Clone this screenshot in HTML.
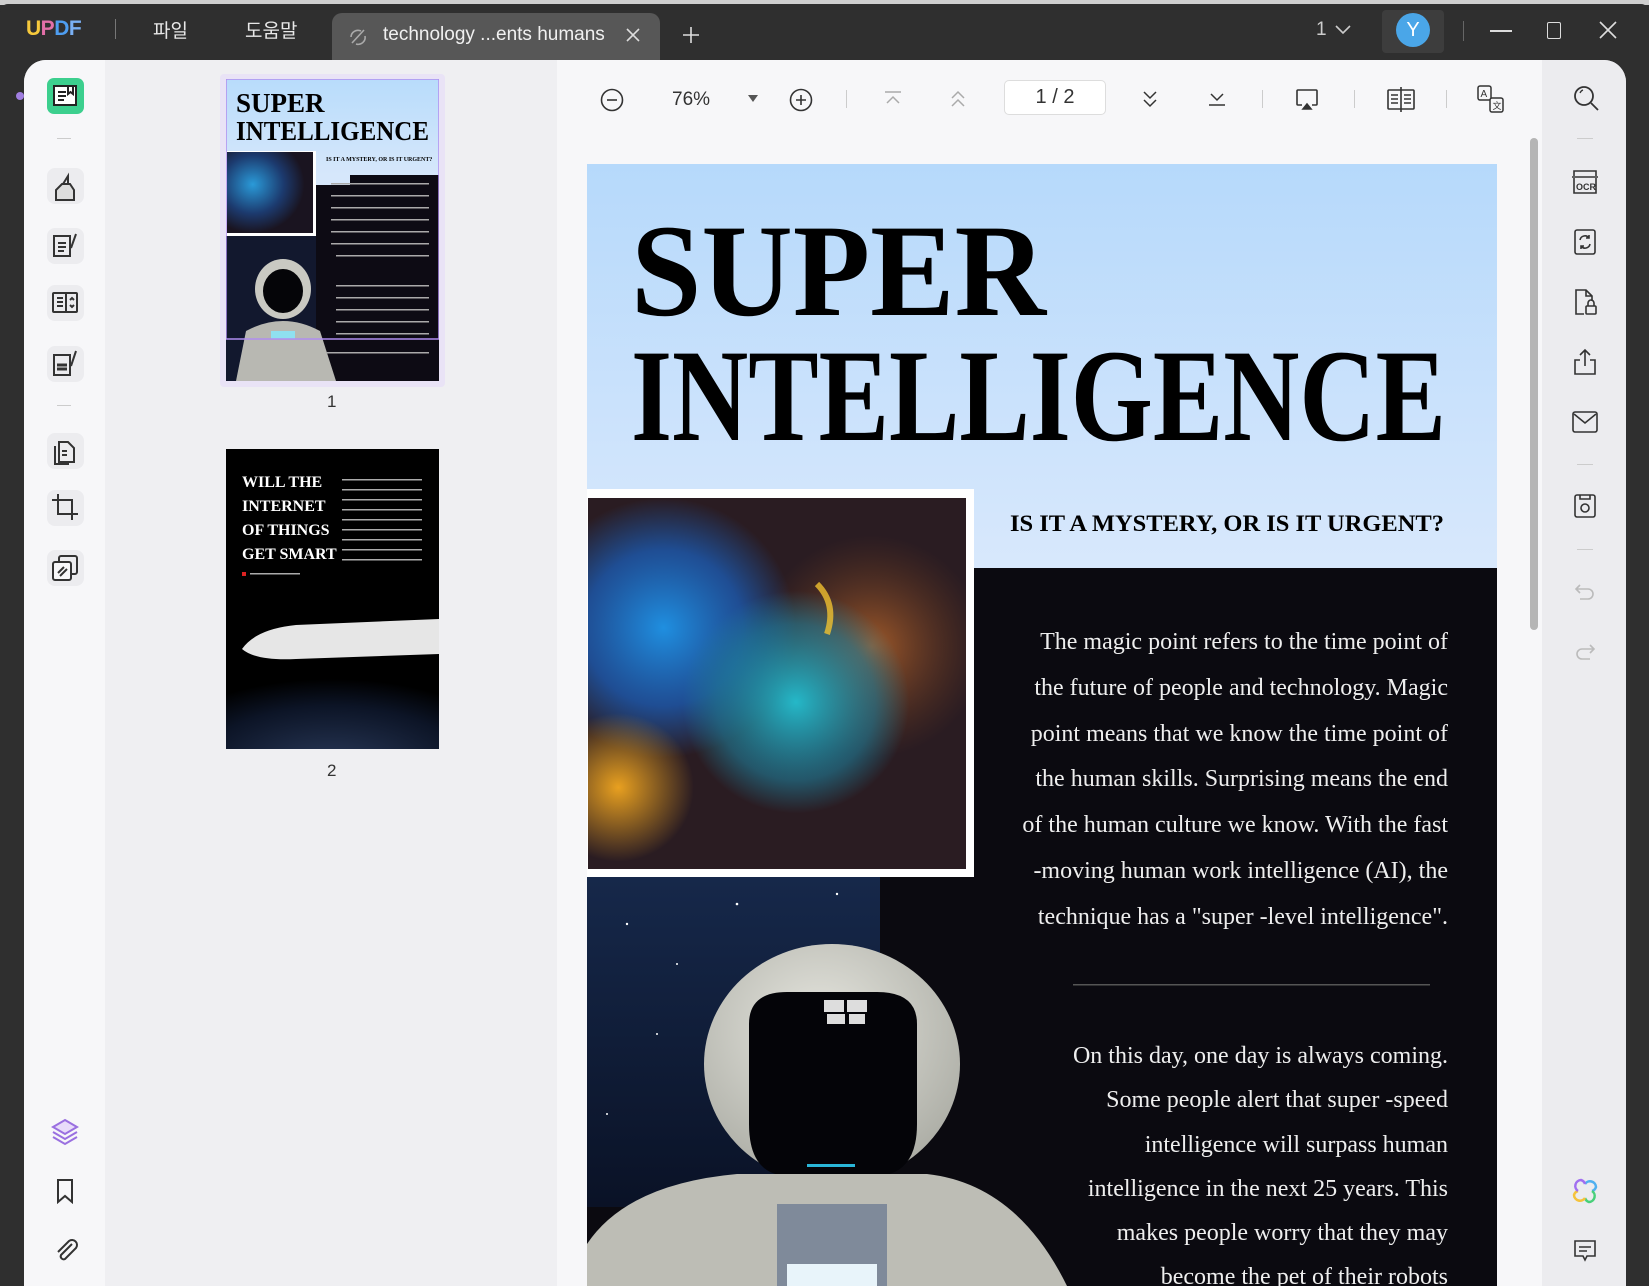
<!DOCTYPE html>
<html><head><meta charset="utf-8"><style>
*{margin:0;padding:0;box-sizing:border-box}
body{width:1649px;height:1286px;overflow:hidden;background:#2f2f2f;font-family:"Liberation Sans","Noto Sans CJK KR",sans-serif;position:relative}
.abs{position:absolute}
.tb{color:#e8e8e8;font-size:19px}
svg{display:block}
.ib{position:absolute;left:47px;width:37px;height:36px;border-radius:8px;background:#ececef}
</style></head><body>
<div class="abs" style="left:0;top:0;width:1649px;height:5px;background:#cfcfcf"></div>
<div class="abs" style="left:0;top:4px;width:1649px;height:1282px;background:#2f2f2f;border-radius:8px 8px 0 0"></div>
<div class="abs" style="left:26px;top:17px;font-size:21px;font-weight:bold;letter-spacing:-0.5px"><span style="color:#f6c93c">U</span><span style="color:#e26fa8">P</span><span style="color:#4e9df0">D</span><span style="color:#7ab0f4">F</span></div>
<div class="abs" style="left:115px;top:19px;width:1px;height:20px;background:#777"></div>
<div class="abs tb" style="left:153px;top:16px">파일</div>
<div class="abs tb" style="left:245px;top:16px">도움말</div>
<div class="abs" style="left:332px;top:13px;width:328px;height:47px;background:#575757;border-radius:10px 10px 0 0"></div>
<svg class="abs" style="left:346px;top:25px" width="24" height="24" viewBox="0 0 24 24" fill="none" stroke="#aaa" stroke-width="1.6"><path d="M6 18 L18 5 M5 12a7 7 0 0 1 10-6 M19 11a7 7 0 0 1-9 8"/></svg>
<div class="abs tb" style="left:383px;top:24px;font-size:19px;color:#f0f0f0">technology ...ents humans</div>
<svg class="abs" style="left:625px;top:27px" width="16" height="16" viewBox="0 0 16 16" stroke="#ddd" stroke-width="1.6"><path d="M2 2L14 14M14 2L2 14"/></svg>
<svg class="abs" style="left:682px;top:26px" width="18" height="18" viewBox="0 0 18 18" stroke="#ddd" stroke-width="1.6"><path d="M9 1V17M1 9H17"/></svg>
<div class="abs tb" style="left:1316px;top:19px;color:#ccc">1</div>
<svg class="abs" style="left:1335px;top:24px" width="16" height="12" viewBox="0 0 16 12" fill="none" stroke="#ccc" stroke-width="1.6"><path d="M1 2L8 9L15 2"/></svg>
<div class="abs" style="left:1382px;top:10px;width:62px;height:43px;background:#3d3d3d;border-radius:4px"></div>
<div class="abs" style="left:1396px;top:13px;width:34px;height:34px;border-radius:50%;background:#4aa6e8;color:#fff;font-size:20px;text-align:center;line-height:34px">Y</div>
<div class="abs" style="left:1463px;top:21px;width:1px;height:20px;background:#666"></div>
<div class="abs" style="left:1490px;top:30px;width:22px;height:1.5px;background:#ddd"></div>
<div class="abs" style="left:1547px;top:22px;width:14px;height:17px;border:1.6px solid #ddd;border-radius:2px"></div>
<svg class="abs" style="left:1599px;top:21px" width="18" height="18" viewBox="0 0 18 18" stroke="#ddd" stroke-width="1.6"><path d="M1 1L17 17M17 1L1 17"/></svg>

<div class="abs" style="left:24px;top:60px;width:1602px;height:1226px;background:#f7f7f9;border-radius:22px 22px 0 0;overflow:hidden">
  <div class="abs" style="left:0;top:0;width:81px;height:1226px;background:#f7f7f9"></div>
  <div class="abs" style="left:81px;top:0;width:452px;height:1226px;background:#efeff2"></div>
  <div class="abs" style="left:1518px;top:0;width:84px;height:1226px;background:#ececef"></div>
</div>
<div class="abs" style="left:16px;top:92px;width:8px;height:8px;border-radius:50%;background:#a07ee0"></div>

<div class="ib" style="top:168px"></div><div class="ib" style="top:228px"></div><div class="ib" style="top:285px"></div><div class="ib" style="top:346px"></div><div class="ib" style="top:433px"></div><div class="ib" style="top:490px"></div><div class="ib" style="top:550px"></div>
<div class="abs" style="left:47px;top:78px;width:37px;height:36px;border-radius:7px;background:#3ccf8e"></div>
<svg class="abs" style="left:51px;top:82px" width="28" height="28" viewBox="0 0 28 28" fill="none" stroke="#222" stroke-width="2"><rect x="3" y="4" width="22" height="19" fill="#fff"/><path d="M7 10h8M7 14h8M7 18h6M17 4v8l2.5-2 2.5 2V4"/></svg>
<div class="abs" style="left:57px;top:138px;width:14px;height:1px;background:#ccc"></div>
<svg class="abs" style="left:50px;top:170px" width="30" height="32" viewBox="0 0 30 32" fill="none" stroke="#333" stroke-width="2"><path d="M6 30V20l6-6 8 0 4 6v10z" fill="#ddd"/><path d="M13 14l5-8v8"/></svg>
<svg class="abs" style="left:50px;top:230px" width="30" height="30" viewBox="0 0 30 30" fill="none" stroke="#333" stroke-width="2"><path d="M4 6h16v20H4zM8 13h8M8 17h8M8 21h6M21 18l5-14"/></svg>
<svg class="abs" style="left:50px;top:288px" width="30" height="30" viewBox="0 0 30 30" fill="none" stroke="#333" stroke-width="2"><rect x="3" y="5" width="24" height="19" rx="1"/><path d="M16 5v19M7 10h6M7 14h6M7 18h6M20 12l2-2 2 2M20 17l2 2 2-2"/></svg>
<svg class="abs" style="left:50px;top:348px" width="30" height="30" viewBox="0 0 30 30" fill="none" stroke="#333" stroke-width="2"><path d="M4 7h16v20H4z"/><path d="M7 17h10M7 21h10" stroke-width="3"/><path d="M21 18l5-15"/></svg>
<div class="abs" style="left:57px;top:405px;width:14px;height:1px;background:#ccc"></div>
<svg class="abs" style="left:50px;top:436px" width="30" height="30" viewBox="0 0 30 30" fill="none" stroke="#333" stroke-width="2"><path d="M9 6h9l6 6v14H9zM5 10v18h14M12 15h5M12 19h5"/></svg>
<svg class="abs" style="left:50px;top:492px" width="30" height="30" viewBox="0 0 30 30" fill="none" stroke="#333" stroke-width="2"><path d="M8 2v20h20M2 8h20v20"/></svg>
<svg class="abs" style="left:50px;top:553px" width="30" height="30" viewBox="0 0 30 30" fill="none" stroke="#333" stroke-width="2"><rect x="9" y="3" width="18" height="18" rx="2"/><rect x="3" y="9" width="18" height="18" rx="2" fill="#f7f7f9"/><path d="M8 20l6-6M10 23l7-7"/></svg>
<svg class="abs" style="left:50px;top:1116px" width="30" height="30" viewBox="0 0 30 30" fill="none" stroke="#9a70e0" stroke-width="2"><path d="M15 4L27 11 15 18 3 11z" fill="#e8dcfa"/><path d="M3 16l12 7 12-7M3 21l12 7 12-7"/></svg>
<svg class="abs" style="left:54px;top:1178px" width="22" height="26" viewBox="0 0 22 26" fill="none" stroke="#333" stroke-width="2"><path d="M4 2h14v22l-7-6-7 6z"/></svg>
<svg class="abs" style="left:52px;top:1236px" width="28" height="28" viewBox="0 0 28 28" fill="none" stroke="#333" stroke-width="2"><path d="M20 8L9 19a3 3 0 0 0 4 4L24 12a5 5 0 0 0-7-7L6 16"/></svg>

<div class="abs" style="left:220px;top:74px;width:225px;height:313px;background:#e9e3f6;border-radius:4px"></div>
<svg class="abs" style="left:226px;top:79px" width="213" height="302" viewBox="0 0 213 302">
<defs><linearGradient id="tg" x1="0" y1="0" x2="0" y2="1"><stop offset="0" stop-color="#b8dcfb"/><stop offset="1" stop-color="#d6e7fb"/></linearGradient>
<radialGradient id="nb2" cx="0.3" cy="0.4" r="0.6"><stop offset="0" stop-color="#2a9ad8"/><stop offset="0.6" stop-color="#1c3a6e"/><stop offset="1" stop-color="#1a1420"/></radialGradient></defs>
<rect width="213" height="302" fill="#0d0b14"/><rect width="213" height="96" fill="url(#tg)"/>
<rect x="0" y="96" width="124" height="10" fill="#d6e7fb"/>
<text x="10" y="33" font-family="Liberation Serif" font-weight="bold" font-size="27">SUPER</text>
<text x="10" y="61" font-family="Liberation Serif" font-weight="bold" font-size="27" textLength="193" lengthAdjust="spacingAndGlyphs">INTELLIGENCE</text>
<text x="100" y="82" font-family="Liberation Serif" font-size="6" font-weight="bold">IS IT A MYSTERY, OR IS IT URGENT?</text>
<rect x="0" y="72" width="90" height="85" fill="#fff"/><rect x="1" y="73" width="86" height="81" fill="url(#nb2)"/>
<rect x="0" y="157" width="90" height="145" fill="#12182e"/>
<ellipse cx="57" cy="210" rx="28" ry="30" fill="#c9c9c2"/><ellipse cx="57" cy="212" rx="20" ry="22" fill="#050508"/>
<path d="M10 302 L20 252 Q57 232 94 252 L110 302z" fill="#b8b8b2"/>
<rect x="45" y="252" width="24" height="8" fill="#8fe0f0"/>
<g fill="#aaa"><rect x="105" y="104" width="98" height="1.5"/><rect x="105" y="116" width="98" height="1.5"/><rect x="105" y="128" width="98" height="1.5"/><rect x="105" y="140" width="98" height="1.5"/><rect x="105" y="152" width="98" height="1.5"/><rect x="105" y="164" width="98" height="1.5"/><rect x="110" y="176" width="93" height="1.5"/><rect x="110" y="206" width="93" height="1.5"/><rect x="110" y="218" width="93" height="1.5"/><rect x="110" y="230" width="93" height="1.5"/><rect x="110" y="242" width="93" height="1.5"/><rect x="110" y="254" width="93" height="1.5"/><rect x="100" y="273" width="103" height="1.5"/></g>
<rect x="0" y="0" width="213" height="260" fill="none" stroke="#b08ef0" stroke-width="1.5"/>
</svg>
<div class="abs" style="left:327px;top:392px;font-size:17px;color:#333">1</div>
<svg class="abs" style="left:226px;top:449px" width="213" height="300" viewBox="0 0 213 300">
<defs><radialGradient id="earth" cx="0.5" cy="1.2" r="0.9"><stop offset="0" stop-color="#2a3a5a"/><stop offset="0.7" stop-color="#0c1426"/><stop offset="1" stop-color="#000"/></radialGradient></defs>
<rect width="213" height="300" fill="#000"/><rect y="200" width="213" height="100" fill="url(#earth)"/>
<g font-family="Liberation Serif" font-weight="bold" font-size="16" fill="#fff"><text x="16" y="38">WILL THE</text><text x="16" y="62">INTERNET</text><text x="16" y="86">OF THINGS</text><text x="16" y="110">GET SMART</text></g>
<g fill="#aaa"><rect x="116" y="30" width="80" height="1.5"/><rect x="116" y="40" width="80" height="1.5"/><rect x="116" y="50" width="80" height="1.5"/><rect x="116" y="60" width="80" height="1.5"/><rect x="116" y="70" width="80" height="1.5"/><rect x="116" y="80" width="80" height="1.5"/><rect x="116" y="90" width="80" height="1.5"/><rect x="116" y="100" width="80" height="1.5"/><rect x="116" y="110" width="80" height="1.5"/><rect x="24" y="124" width="50" height="1.5"/></g>
<rect x="16" y="123" width="4" height="4" fill="#d22"/>
<path d="M16 200 Q30 180 70 176 L213 170 L213 205 L70 210 Q30 212 16 200z" fill="#e6e6e6"/>
</svg>
<div class="abs" style="left:327px;top:761px;font-size:17px;color:#333">2</div>

<svg class="abs" style="left:600px;top:88px" width="24" height="24" viewBox="0 0 24 24" fill="none" stroke="#333" stroke-width="1.6"><circle cx="12" cy="12" r="10.5"/><path d="M7 12h10"/></svg>
<div class="abs" style="left:672px;top:89px;font-size:19px;color:#333">76%</div>
<svg class="abs" style="left:747px;top:94px" width="12" height="9" viewBox="0 0 12 9"><path d="M1 1h10L6 8z" fill="#555"/></svg>
<svg class="abs" style="left:789px;top:88px" width="24" height="24" viewBox="0 0 24 24" fill="none" stroke="#333" stroke-width="1.6"><circle cx="12" cy="12" r="10.5"/><path d="M7 12h10M12 7v10"/></svg>
<div class="abs" style="left:846px;top:90px;width:1px;height:18px;background:#ccc"></div>
<svg class="abs" style="left:883px;top:90px" width="20" height="18" viewBox="0 0 20 18" fill="none" stroke="#aaa" stroke-width="1.5"><path d="M2 2h16M4 13l6-6 6 6"/></svg>
<svg class="abs" style="left:948px;top:88px" width="20" height="22" viewBox="0 0 20 22" fill="none" stroke="#aaa" stroke-width="1.5"><path d="M4 10l6-6 6 6M4 18l6-6 6 6"/></svg>
<div class="abs" style="left:1004px;top:80px;width:102px;height:35px;background:#fff;border:1px solid #ddd;border-radius:5px;text-align:center;font-size:20px;line-height:33px;color:#333">1 / 2</div>
<svg class="abs" style="left:1140px;top:88px" width="20" height="22" viewBox="0 0 20 22" fill="none" stroke="#333" stroke-width="1.5"><path d="M4 4l6 6 6-6M4 12l6 6 6-6"/></svg>
<svg class="abs" style="left:1207px;top:90px" width="20" height="18" viewBox="0 0 20 18" fill="none" stroke="#333" stroke-width="1.5"><path d="M4 4l6 6 6-6M2 15h16"/></svg>
<div class="abs" style="left:1262px;top:90px;width:1px;height:18px;background:#ccc"></div>
<svg class="abs" style="left:1294px;top:86px" width="26" height="26" viewBox="0 0 26 26" fill="none" stroke="#333" stroke-width="1.6"><path d="M8 19H4a1 1 0 0 1-1-1V5a1 1 0 0 1 1-1h18a1 1 0 0 1 1 1v13a1 1 0 0 1-1 1h-4"/><path d="M9 23l4-5 4 5z" fill="#333"/></svg>
<div class="abs" style="left:1354px;top:90px;width:1px;height:18px;background:#ccc"></div>
<svg class="abs" style="left:1386px;top:86px" width="30" height="26" viewBox="0 0 30 26" fill="none" stroke="#333" stroke-width="1.6"><rect x="2" y="4" width="26" height="19" rx="1"/><path d="M15 1v25M5 9h7M5 13h7M5 17h7M18 9h7M18 13h7M18 17h7"/></svg>
<div class="abs" style="left:1446px;top:90px;width:1px;height:18px;background:#ccc"></div>
<svg class="abs" style="left:1476px;top:84px" width="30" height="30" viewBox="0 0 30 30" fill="none" stroke="#333" stroke-width="1.5"><rect x="2" y="2" width="13" height="14" rx="2"/><rect x="14" y="14" width="13" height="14" rx="2" fill="#f7f7f9"/><text x="4.5" y="13" font-size="10" font-family="Liberation Sans" fill="#333" stroke="none">A</text><text x="16.5" y="25" font-size="9" font-family="Noto Sans CJK SC" fill="#333" stroke="none">文</text></svg>

<svg class="abs" style="left:1572px;top:84px" width="28" height="28" viewBox="0 0 28 28" fill="none" stroke="#333" stroke-width="1.8"><circle cx="12" cy="12" r="9"/><path d="M19 19l7 7"/><path d="M8 9a5 5 0 0 1 3-3" stroke-width="1.2"/></svg>
<div class="abs" style="left:1577px;top:138px;width:16px;height:1px;background:#ccc"></div>
<svg class="abs" style="left:1570px;top:168px" width="30" height="28" viewBox="0 0 30 28" fill="none" stroke="#333" stroke-width="1.6"><path d="M4 8V3h22v5M2 9h26M4 10v15h22V10"/><text x="6" y="22" font-size="9" font-weight="bold" font-family="Liberation Sans" fill="#333" stroke="none">OCR</text></svg>
<svg class="abs" style="left:1572px;top:228px" width="26" height="28" viewBox="0 0 26 28" fill="none" stroke="#333" stroke-width="1.6"><rect x="3" y="2" width="20" height="24" rx="2"/><path d="M8 12a5 5 0 0 1 9-2M18 16a5 5 0 0 1-9 2M17 7v3h-3M9 21v-3h3"/></svg>
<svg class="abs" style="left:1572px;top:288px" width="26" height="28" viewBox="0 0 26 28" fill="none" stroke="#333" stroke-width="1.6"><path d="M12 26H4V2h10l6 6v5M14 2v6h6"/><rect x="14" y="18" width="10" height="8" rx="1"/><path d="M16 18v-3a3 3 0 0 1 6 0v3"/></svg>
<svg class="abs" style="left:1572px;top:348px" width="26" height="28" viewBox="0 0 26 28" fill="none" stroke="#333" stroke-width="1.6"><path d="M8 12H3v14h20V12h-5M13 18V2M8 7l5-5 5 5"/></svg>
<svg class="abs" style="left:1571px;top:410px" width="28" height="24" viewBox="0 0 28 24" fill="none" stroke="#333" stroke-width="1.6"><rect x="2" y="2" width="24" height="20" rx="2"/><path d="M3 4l11 9 11-9"/></svg>
<div class="abs" style="left:1577px;top:464px;width:16px;height:1px;background:#ccc"></div>
<svg class="abs" style="left:1572px;top:492px" width="26" height="28" viewBox="0 0 26 28" fill="none" stroke="#333" stroke-width="1.6"><rect x="3" y="3" width="20" height="22" rx="2"/><circle cx="13" cy="16" r="4"/><path d="M8 3v4h10V3"/></svg>
<div class="abs" style="left:1577px;top:549px;width:16px;height:1px;background:#ccc"></div>
<svg class="abs" style="left:1574px;top:582px" width="22" height="20" viewBox="0 0 22 20" fill="none" stroke="#bbb" stroke-width="1.6"><path d="M6 3L2 7l4 4M2 7h12a5 5 0 0 1 0 10H6"/></svg>
<svg class="abs" style="left:1574px;top:642px" width="22" height="20" viewBox="0 0 22 20" fill="none" stroke="#bbb" stroke-width="1.6"><path d="M16 3l4 4-4 4M20 7H8a5 5 0 0 0 0 10h8"/></svg>
<svg class="abs" style="left:1570px;top:1176px" width="30" height="30" viewBox="0 0 30 30" fill="none" stroke-width="2.5"><path d="M15 8a6 6 0 0 1 11 3 6 6 0 0 1-4 4" stroke="#4fb0f0"/><path d="M22 15a6 6 0 0 1-3 11 6 6 0 0 1-4-4" stroke="#48d07a"/><path d="M15 22a6 6 0 0 1-11-3 6 6 0 0 1 4-4" stroke="#f5c33c"/><path d="M8 15a6 6 0 0 1 3-11 6 6 0 0 1 4 4" stroke="#a16ff0"/></svg>
<svg class="abs" style="left:1572px;top:1238px" width="26" height="26" viewBox="0 0 26 26" fill="none" stroke="#333" stroke-width="1.6"><path d="M3 3h20v15h-8l-2 4-2-4H3z"/><path d="M7 9h12M7 13h8"/></svg>

<div class="abs" style="left:1530px;top:138px;width:8px;height:492px;background:#b5b5b5;border-radius:4px"></div>

<svg class="abs" style="left:587px;top:164px" width="910" height="1122" viewBox="0 0 910 1122">
<defs>
<linearGradient id="sky" x1="0" y1="0" x2="0" y2="1"><stop offset="0" stop-color="#b6d9fb"/><stop offset="1" stop-color="#d8e8fc"/></linearGradient>
<radialGradient id="n1" cx="0.2" cy="0.35" r="0.35"><stop offset="0" stop-color="#1f8fe0"/><stop offset="0.6" stop-color="#1c5ab0" stop-opacity="0.8"/><stop offset="1" stop-color="#1c5ab0" stop-opacity="0"/></radialGradient>
<radialGradient id="n2" cx="0.55" cy="0.55" r="0.3"><stop offset="0" stop-color="#25b8c8"/><stop offset="0.7" stop-color="#1f7e9a" stop-opacity="0.6"/><stop offset="1" stop-color="#1f7e9a" stop-opacity="0"/></radialGradient>
<radialGradient id="n3" cx="0.75" cy="0.4" r="0.3"><stop offset="0" stop-color="#a05a2a"/><stop offset="1" stop-color="#6a3a20" stop-opacity="0"/></radialGradient>
<radialGradient id="n4" cx="0.08" cy="0.78" r="0.2"><stop offset="0" stop-color="#e8a020"/><stop offset="1" stop-color="#e8a020" stop-opacity="0"/></radialGradient>
<radialGradient id="helm" cx="0.45" cy="0.35" r="0.7"><stop offset="0" stop-color="#e6e6df"/><stop offset="1" stop-color="#a9aaa2"/></radialGradient>
<linearGradient id="stars" x1="0" y1="0" x2="0" y2="1"><stop offset="0" stop-color="#16284a"/><stop offset="1" stop-color="#0a1226"/></linearGradient>
</defs>
<rect width="910" height="1122" fill="#0b0a10"/>
<rect width="910" height="404" fill="url(#sky)"/>
<rect x="0" y="325" width="387" height="388" fill="#fff"/>
<rect x="1" y="334" width="378" height="371" fill="#2a1c22"/>
<rect x="1" y="334" width="378" height="371" fill="url(#n3)"/>
<rect x="1" y="334" width="378" height="371" fill="url(#n1)"/>
<rect x="1" y="334" width="378" height="371" fill="url(#n2)"/>
<rect x="1" y="334" width="378" height="371" fill="url(#n4)"/>
<path d="M230 420 Q250 440 240 470" stroke="#f0c030" stroke-width="6" fill="none" opacity="0.8"/>
<rect x="0" y="713" width="293" height="330" fill="url(#stars)"/>
<g fill="#fff"><circle cx="40" cy="760" r="1.2"/><circle cx="90" cy="800" r="1"/><circle cx="150" cy="740" r="1.3"/><circle cx="210" cy="790" r="1"/><circle cx="250" cy="730" r="1.2"/><circle cx="70" cy="870" r="1"/><circle cx="180" cy="850" r="1.2"/><circle cx="20" cy="950" r="1"/><circle cx="120" cy="920" r="1"/><circle cx="260" cy="880" r="1"/></g>
<ellipse cx="245" cy="900" rx="128" ry="120" fill="url(#helm)"/>
<path d="M162 860 Q162 828 200 828 L290 828 Q330 828 330 860 L330 960 Q330 1010 290 1012 L200 1012 Q162 1010 162 960z" fill="#040408"/>
<g fill="#ddd"><rect x="237" y="836" width="20" height="12"/><rect x="260" y="836" width="20" height="12"/><rect x="240" y="850" width="18" height="10"/><rect x="262" y="850" width="16" height="10"/></g>
<rect x="220" y="1000" width="48" height="3" fill="#2ab6d8"/>
<path d="M0 1122 L0 1080 Q40 1020 150 1010 L340 1010 Q430 1020 480 1122z" fill="#bdbdb5"/>
<rect x="190" y="1040" width="110" height="82" fill="#7f8a9a"/>
<rect x="200" y="1100" width="90" height="22" fill="#e8f4fa"/>
<g font-family="Liberation Serif" font-weight="bold" fill="#000">
<text x="44" y="151" font-size="132" textLength="415" lengthAdjust="spacingAndGlyphs">SUPER</text>
<text x="44" y="276" font-size="132" textLength="815" lengthAdjust="spacingAndGlyphs">INTELLIGENCE</text>
<text x="423" y="367" font-size="23" textLength="434" lengthAdjust="spacingAndGlyphs">IS IT A MYSTERY, OR IS IT URGENT?</text>
</g>
<g font-family="Liberation Serif" font-size="24" fill="#eee" text-anchor="end">
<text x="861" y="485">The magic point refers to the time point of</text>
<text x="861" y="531">the future of people and technology. Magic</text>
<text x="861" y="577">point means that we know the time point of</text>
<text x="861" y="622">the human skills. Surprising means the end</text>
<text x="861" y="668">of the human culture we know. With the fast</text>
<text x="861" y="714">-moving human work intelligence (AI), the</text>
<text x="861" y="760">technique has a "super -level intelligence".</text>
<text x="861" y="899">On this day, one day is always coming.</text>
<text x="861" y="943">Some people alert that super -speed</text>
<text x="861" y="988">intelligence will surpass human</text>
<text x="861" y="1032">intelligence in the next 25 years. This</text>
<text x="861" y="1076">makes people worry that they may</text>
<text x="861" y="1120">become the pet of their robots</text>
</g>
<rect x="486" y="820" width="357" height="1.5" fill="#555"/>
</svg>
</body></html>
